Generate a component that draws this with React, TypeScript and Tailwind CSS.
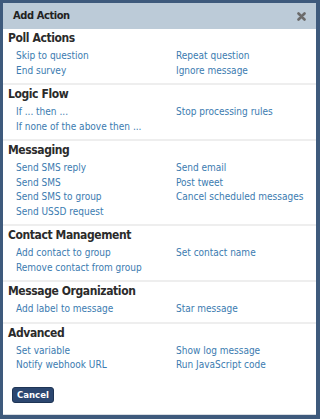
const sections: { title: string; items: [string, string?][] }[] = [
  {
    title: 'Poll Actions',
    items: [
      ['Skip to question', 'Repeat question'],
      ['End survey', 'Ignore message'],
    ],
  },
  {
    title: 'Logic Flow',
    items: [
      ['If ... then ...', 'Stop processing rules'],
      ['If none of the above then ...'],
    ],
  },
  {
    title: 'Messaging',
    items: [
      ['Send SMS reply', 'Send email'],
      ['Send SMS', 'Post tweet'],
      ['Send SMS to group', 'Cancel scheduled messages'],
      ['Send USSD request'],
    ],
  },
  {
    title: 'Contact Management',
    items: [
      ['Add contact to group', 'Set contact name'],
      ['Remove contact from group'],
    ],
  },
  {
    title: 'Message Organization',
    items: [['Add label to message', 'Star message']],
  },
  {
    title: 'Advanced',
    items: [
      ['Set variable', 'Show log message'],
      ['Notify webhook URL', 'Run JavaScript code'],
    ],
  },
];

export default function App() {
  return (
    <div
      className="w-[320px] h-[419px] bg-[#3e5a7c] pt-[3px] pl-[3px] pr-[4px] pb-[4px]"
      style={{ fontFamily: '"DejaVu Sans Condensed", "DejaVu Sans", Tahoma, sans-serif' }}
    >
      <div className="h-full bg-white border-b border-[#d8dde3] flex flex-col overflow-hidden">
        <div className="h-[26px] flex-none bg-[#bccbd8] flex items-center justify-between pl-[10px] pr-[10px]">
          <span className="text-[11px] font-bold text-[#222] tracking-[-0.4px]">Add Action</span>
          <svg width="9" height="9" viewBox="0 0 9 9">
            <path d="M1.5 1.5 L7.5 7.5 M7.5 1.5 L1.5 7.5" stroke="#6b6b6b" strokeWidth="2.6" strokeLinecap="round" />
          </svg>
        </div>
        {sections.map((s, i) => (
          <div
            key={s.title}
            className={`flex-none pl-[5px] pt-[1px] pb-[5px] ${i < sections.length - 1 ? 'border-b-2 border-[#eeeeee]' : ''}`}
          >
            <div className="text-[12px] font-bold text-[#2b2b2b] leading-[17px] mb-[2px] tracking-[-0.4px]">
              {s.title}
            </div>
            {s.items.map((row, j) => (
              <div key={j} className="flex text-[10px] leading-[14.5px] text-[#3b7bb0] whitespace-nowrap">
                <span className="w-[168px] pl-[8px]">{row[0]}</span>
                <span>{row[1]}</span>
              </div>
            ))}
          </div>
        ))}
        <div className="flex-none pl-[9px] pt-[3px]">
          <button className="bg-[#2c4770] text-white text-[9.5px] font-bold rounded-[3px] px-[4px] h-[16px] leading-[14px] border border-[#1f3555]">
            Cancel
          </button>
        </div>
      </div>
    </div>
  );
}
